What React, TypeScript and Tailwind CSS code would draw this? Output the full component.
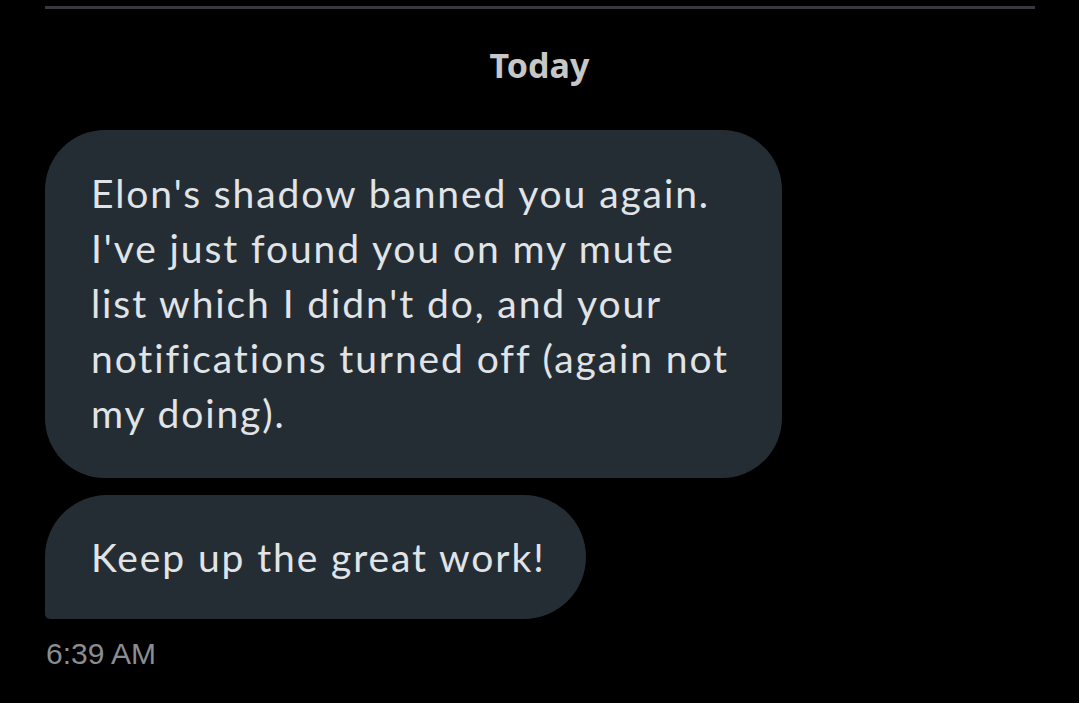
export default function App() {
  return (
    <div className="min-h-[703px] w-full bg-black">
      {/* divider */}
      <div className="pt-[6px] pl-[45px] pr-[44px]">
        <div className="h-[3px] bg-[#38383e]" />
      </div>

      {/* date label */}
      <div className="mt-[36px] text-center">
        <span className="font-['Noto_Sans',sans-serif] text-[34px] font-bold leading-[40px] text-[#c7c7c7]">
          Today
        </span>
      </div>

      {/* messages */}
      <div className="mt-[45px] flex flex-col items-start gap-[17px] pl-[45px] font-['Lato',sans-serif] text-[39px] leading-[55px] tracking-[1.9px] text-[#e1e4e7]">
        <div className="w-[737px] rounded-[60px] bg-[#252d34] pl-[46px] pr-[20px] pt-[36px] pb-[37px] whitespace-nowrap">
          Elon's shadow banned you again.
          <br />
          I've just found you on my mute
          <br />
          list which I didn't do, and your
          <br />
          notifications turned off (again not
          <br />
          my doing).
        </div>
        <div className="w-[541px] rounded-[62px] rounded-bl-[5px] bg-[#252d34] pl-[46px] pt-[35px] pb-[34px] whitespace-nowrap">
          Keep up the great work!
        </div>
      </div>

      {/* timestamp */}
      <div className="mt-[17px] pl-[46px] font-['Liberation_Sans',sans-serif] text-[30px] leading-[36px] text-[#8a8d91]">
        6:39 AM
      </div>
    </div>
  );
}
